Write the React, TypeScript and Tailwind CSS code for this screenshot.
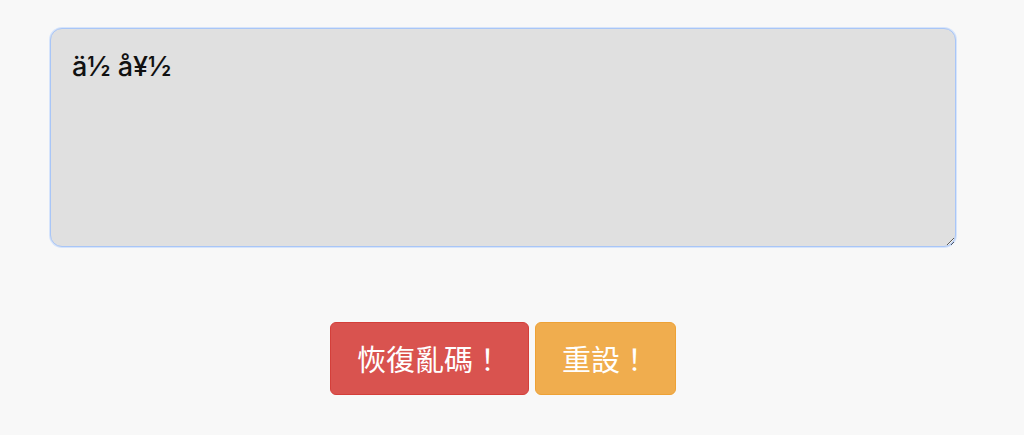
import { useState } from 'react';

export default function App() {
    const [text, setText] = useState('ä½ å¥½');

    return (
        <div className="min-h-[435px] bg-[#f8f8f8] pt-[28px] font-['Liberation_Sans','Noto_Sans_CJK_TC',sans-serif]">
            <div className="ml-[50px] w-[906px]">
                <textarea
                    className="block w-full h-[219px] rounded-[12px] border border-[#a9c6f7] bg-[#e0e0e0] px-[21px] py-[18px] font-['Inter','Liberation_Sans',sans-serif] text-[27px] font-medium leading-[1.5] text-[#111] outline-none shadow-[0_0_0_1px_#d6e4fb]"
                    value={text}
                    onChange={(e) => setText(e.target.value)}
                />
                <div className="mt-[75px] flex justify-center gap-[6px]">
                    <button className="h-[73px] px-[26px] rounded-[6px] border border-[#d43f3a] bg-[#d9534f] font-['Noto_Sans_CJK_TC',sans-serif] text-[29px] text-white">
                        恢復亂碼！
                    </button>
                    <button
                        className="h-[73px] px-[26px] rounded-[6px] border border-[#eea236] bg-[#f0ad4e] font-['Noto_Sans_CJK_TC',sans-serif] text-[29px] text-white"
                        onClick={() => setText('')}
                    >
                        重設！
                    </button>
                </div>
            </div>
        </div>
    );
}
